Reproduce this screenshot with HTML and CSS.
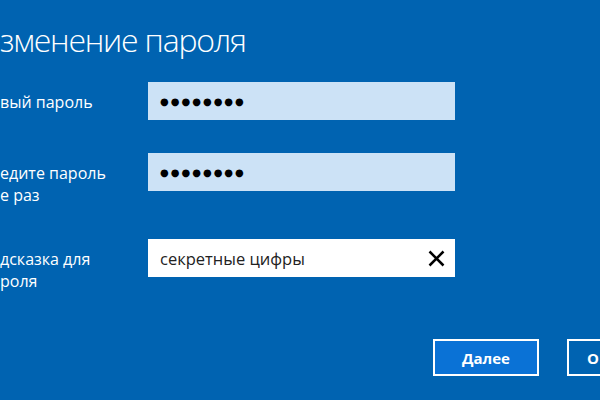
FILE: index.html
```html
<!DOCTYPE html>
<html lang="ru">
<head>
<meta charset="utf-8">
<title>Изменение пароля</title>
<link rel="stylesheet" href="styles.css">
</head>
<body>
<div class="dialog">
  <h1 class="title">зменение пароля</h1>
  <div class="form">
    <label class="label" for="p1">вый пароль</label>
    <div class="field field-pass" id="p1"><span class="dots">&#9679;&#9679;&#9679;&#9679;&#9679;&#9679;&#9679;&#9679;</span></div>

    <label class="label" for="p2">едите пароль<br>е раз</label>
    <div class="field field-pass" id="p2"><span class="dots">&#9679;&#9679;&#9679;&#9679;&#9679;&#9679;&#9679;&#9679;</span></div>

    <label class="label" for="p3">дсказка для<br>роля</label>
    <div class="field field-text" id="p3">
      <span class="value">секретные цифры</span>
      <svg class="clear" width="17" height="17" viewBox="0 0 17 17" aria-hidden="true">
        <path d="M1.5 1.5 L15.5 15.5 M15.5 1.5 L1.5 15.5" stroke="#000" stroke-width="2.5" fill="none"/>
      </svg>
    </div>
  </div>
  <div class="actions">
    <button class="btn btn-primary">Далее</button>
    <button class="btn btn-cut">О</button>
  </div>
</div>
</body>
</html>
```

FILE: styles.css
```css
html, body {
  margin: 0;
  padding: 0;
  width: 600px;
  height: 400px;
  overflow: hidden;
  background: #0063b1;
}

.dialog {
  padding-top: 18px;
  font-family: "Open Sans", "Noto Sans", sans-serif;
  color: #fff;
}

.title {
  margin: 0 0 20px 0;
  font-size: 32px;
  line-height: 44px;
  font-weight: 300;
  letter-spacing: -1.2px;
  white-space: nowrap;
}

.form {
  display: grid;
  grid-template-columns: 148px 307px;
  row-gap: 33px;
  align-items: start;
}

.label {
  padding-top: 9px;
  font-size: 16px;
  line-height: 22px;
  white-space: nowrap;
}

.field {
  height: 38px;
  box-sizing: border-box;
  display: flex;
  align-items: center;
  padding-left: 12px;
}

.field-pass {
  background: #cce2f6;
}

.dots {
  font-family: "DejaVu Sans", sans-serif;
  font-size: 10px;
  letter-spacing: 2px;
  color: #000;
}

.field-text {
  background: #fff;
  justify-content: space-between;
  padding-right: 10px;
  padding-left: 12px;
}

.value {
  font-size: 16.5px;
  color: #222;
}

.clear {
  display: block;
}

.actions {
  display: flex;
  gap: 28px;
  margin-top: 47px;
  padding-left: 433px;
}

.btn {
  flex: 0 0 auto;
  width: 106px;
  height: 37px;
  box-sizing: border-box;
  border: 2px solid #fff;
  background: #0063b1;
  color: #fff;
  font-family: "Open Sans", "Noto Sans", sans-serif;
  font-weight: 700;
  font-size: 15px;
  padding: 0;
}

.btn-primary {
  background: #0a72d6;
}

.btn-cut {
  text-align: left;
  padding-left: 18px;
}
```
